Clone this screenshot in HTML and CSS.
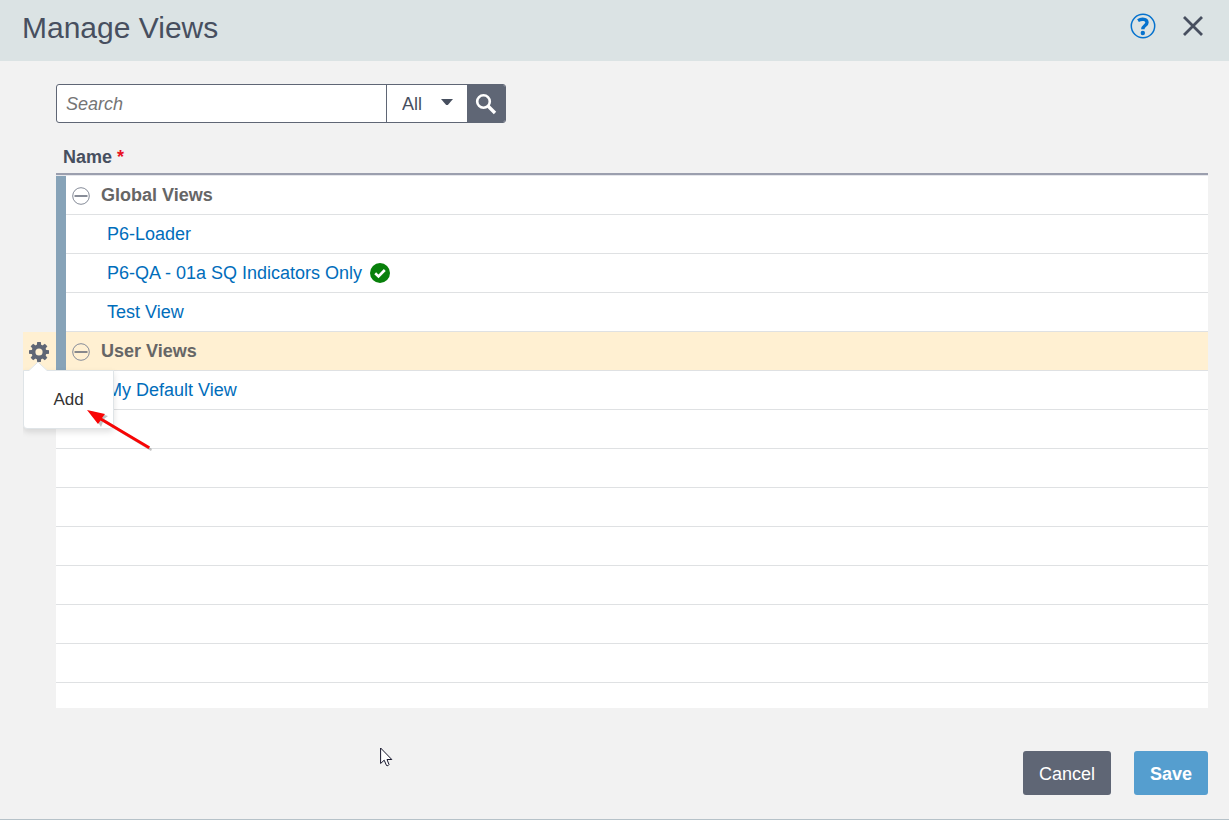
FILE: index.html
```html
<!DOCTYPE html>
<html lang="en">
<head>
<meta charset="utf-8">
<title>Manage Views</title>
<link rel="stylesheet" href="styles.css">
</head>
<body>
<div class="dialog" role="dialog" aria-labelledby="dialog-title">
  <header class="dialog-header">
    <h1 class="dialog-title" id="dialog-title">Manage Views</h1>
    <div class="header-actions">
      <button class="icon-button" type="button" aria-label="Help">
        <svg width="26" height="26" viewBox="0 0 26 26"><circle cx="13" cy="13" r="11.7" fill="none" stroke="#0572ce" stroke-width="1.5"/><path d="M8 7.600C11.500 5.500 17 5.800 17 9.500C17 12.700 12.800 12.400 12.800 16.300" fill="none" stroke="#0572ce" stroke-width="3.400"/><circle cx="12.800" cy="20" r="2.200" fill="#0572ce"/></svg>
      </button>
      <button class="icon-button" type="button" aria-label="Close">
        <svg width="26" height="26" viewBox="0 0 26 26"><path d="M4 4L22 22M22 4L4 22" fill="none" stroke="#474f5f" stroke-width="2.8"/></svg>
      </button>
    </div>
  </header>

  <main class="dialog-body">
    <form class="search" role="search">
      <input class="search-input" type="text" placeholder="Search" aria-label="Search">
      <div class="search-scope">
        <select class="search-select" aria-label="Search in"><option>All</option></select>
        <svg class="search-caret" width="12" height="7" viewBox="0 0 12 7"><path d="M0 0H12L6.800 6H5.200Z" fill="#474f5f"/></svg>
      </div>
      <button class="search-button" type="submit" aria-label="Run search">
        <svg width="22" height="22" viewBox="0 0 22 22"><circle cx="8.500" cy="8.500" r="6.300" fill="none" stroke="#fff" stroke-width="2.600"/><path d="M13 13L20 20" stroke="#fff" stroke-width="3.400"/></svg>
      </button>
    </form>

    <div class="grid">
      <table class="views">
        <colgroup><col class="col-gutter"><col class="col-marker"><col></colgroup>
        <thead>
          <tr><td></td><th class="name-header" colspan="2" scope="col">Name <span class="required">*</span></th></tr>
        </thead>
        <tbody>
          <tr class="row marked"><td class="gutter"></td><td class="marker"></td><td class="cell"><div class="group"><button class="toggle" type="button" aria-label="Collapse Global Views"><svg width="18" height="18" viewBox="0 0 18 18"><circle cx="9" cy="9" r="8.300" fill="#fff" stroke="#858b98"/><path d="M2.500 9H15.500" stroke="#5f6675" stroke-width="1.500"/></svg></button>Global Views</div></td></tr>
          <tr class="row marked"><td class="gutter"></td><td class="marker"></td><td class="cell"><div class="view"><a class="view-link" href="#">P6-Loader</a></div></td></tr>
          <tr class="row marked"><td class="gutter"></td><td class="marker"></td><td class="cell"><div class="view"><a class="view-link" href="#">P6-QA - 01a SQ Indicators Only</a><svg width="20" height="20" viewBox="0 0 20 20" role="img" aria-label="Current view"><circle cx="10" cy="10" r="10" fill="#08800b"/><path d="M5.200 10.200L8.500 13.400L14.800 7" fill="none" stroke="#fff" stroke-width="2.600"/></svg></div></td></tr>
          <tr class="row marked"><td class="gutter"></td><td class="marker"></td><td class="cell"><div class="view"><a class="view-link" href="#">Test View</a></div></td></tr>
          <tr class="row marked selected">
            <td class="gutter">
              <button class="gear" type="button" aria-label="Row actions" aria-expanded="true"><svg width="20" height="20" viewBox="-10 -10 20 20"><g fill="#5f6675"><path id="tooth" d="M-2.300 -6L-1.800 -10H1.800L2.300 -6Z"/><use href="#tooth" transform="rotate(45)"/><use href="#tooth" transform="rotate(90)"/><use href="#tooth" transform="rotate(135)"/><use href="#tooth" transform="rotate(180)"/><use href="#tooth" transform="rotate(225)"/><use href="#tooth" transform="rotate(270)"/><use href="#tooth" transform="rotate(315)"/></g><circle r="5.500" fill="none" stroke="#5f6675" stroke-width="3.800"/></svg></button>
              <div class="menu" role="menu">
                <svg class="menu-notch" width="20" height="10" viewBox="0 0 20 10"><path d="M0 10L10 1L20 10Z" fill="#fff"/><path d="M0 9.500H1L10 1L19 9.500H20" fill="none" stroke="#dfe4e7"/></svg>
                <button class="menu-item" type="button" role="menuitem">Add</button>
                <svg class="pointer-arrow" width="68" height="46" viewBox="0 0 68 46"><path d="M4 2L21 7L17 10L65 40L64 42L16 13L14 18Z" fill="#777" opacity=".45"/><path d="M0 1L18 5L15 9L63 37.500L61.500 40L13.500 11.500L11 15Z" fill="#f80404"/></svg>
              </div>
            </td>
            <td class="marker"></td><td class="cell"><div class="group"><button class="toggle" type="button" aria-label="Collapse User Views"><svg width="18" height="18" viewBox="0 0 18 18"><circle cx="9" cy="9" r="8.300" fill="none" stroke="#858b98"/><path d="M2.500 9H15.500" stroke="#5f6675" stroke-width="1.500"/></svg></button>User Views</div></td></tr>
          <tr class="row"><td class="gutter"></td><td class="marker"></td><td class="cell"><div class="view"><a class="view-link" href="#">My Default View</a></div></td></tr>
          <tr class="row"><td class="gutter"></td><td class="marker"></td><td class="cell"></td></tr>
          <tr class="row"><td class="gutter"></td><td class="marker"></td><td class="cell"></td></tr>
          <tr class="row"><td class="gutter"></td><td class="marker"></td><td class="cell"></td></tr>
          <tr class="row"><td class="gutter"></td><td class="marker"></td><td class="cell"></td></tr>
          <tr class="row"><td class="gutter"></td><td class="marker"></td><td class="cell"></td></tr>
          <tr class="row"><td class="gutter"></td><td class="marker"></td><td class="cell"></td></tr>
          <tr class="row"><td class="gutter"></td><td class="marker"></td><td class="cell"></td></tr>
          <tr class="row"><td class="gutter"></td><td class="marker"></td><td class="cell"></td></tr>
        </tbody>
      </table>
    </div>
  </main>

  <footer class="dialog-footer">
    <button class="button button-cancel" type="button">Cancel</button>
    <button class="button button-save" type="button">Save</button>
  </footer>
  <svg class="cursor" width="13" height="20" viewBox="0 0 13 20"><path d="M.600 1L.600 16.500L4.200 13.200L6.500 18.500Q8 19.500 9 17.500L7 12.500H11.800Z" fill="#fff" stroke="#14142a"/></svg>
</div>
</body>
</html>
```
FILE: styles.css
```css
* { box-sizing: border-box; }

body {
  margin: 0;
  color: #474f5f;
  font-family: "Liberation Sans", Arial, sans-serif;
  font-size: 18px;
  line-height: 22px;
}

button, input, select {
  margin: 0;
  padding: 0;
  border: 0;
  background: none;
  color: inherit;
  font: inherit;
}

svg { display: block; }

.dialog {
  position: relative;
  display: flex;
  flex-direction: column;
  height: 100vh;
  background: #f2f2f2;
  border-bottom: 1px solid #b6c2c9;
}

.dialog-header {
  display: flex;
  justify-content: space-between;
  align-items: flex-start;
  flex: none;
  height: 61px;
  padding: 10px 23px 0 22px;
  background: #dbe3e4;
}

.dialog-title {
  margin: 0;
  font-size: 30px;
  font-weight: 400;
  line-height: 36px;
}

.header-actions { display: flex; gap: 24px; padding-top: 3px; }

.dialog-body {
  display: flex;
  flex-direction: column;
  flex: 1;
  min-height: 0;
  padding: 23px 21px 0 23px;
}

.search {
  display: flex;
  flex: none;
  width: 450px;
  height: 39px;
  margin-left: 33px;
  border: 1px solid #5f6675;
  border-radius: 3px;
  background: #fff;
  overflow: hidden;
}

.search-input { flex: 1; min-width: 0; padding: 0 9px; }
.search-input::placeholder { color: #757575; font-style: italic; opacity: 1; }

.search-scope {
  position: relative;
  width: 81px;
  border-left: 1px solid #5f6675;
}

.search-select {
  width: 100%;
  height: 100%;
  padding-left: 15px;
  appearance: none;
}

.search-caret { position: absolute; top: 14px; right: 14px; pointer-events: none; }

.search-button {
  display: flex;
  align-items: center;
  justify-content: center;
  width: 38px;
  background: #5f6675;
}

.grid { flex: 1; min-height: 0; margin-top: 23px; overflow: hidden; }

.views { width: 100%; table-layout: fixed; border-spacing: 0; }
.views td, .views th { padding: 0; }
.col-gutter { width: 33px; }
.col-marker { width: 10px; }
.gutter { position: relative; }

.views .name-header {
  height: 29px;
  padding: 0 0 5px 7px;
  border-bottom: 2px solid #9b9fae;
  text-align: left;
}

.required { color: #e81123; }

.row { height: 39px; }
.row:first-child { height: 40px; }
.marker, .cell { background: #fff; border-bottom: 1px solid #dfe1e3; }
.marked .marker { background: #87a3b8; border-bottom-color: #87a3b8; }
.selected .marker { border-bottom-color: #dfe1e3; }
.row:first-child .marker, .row:first-child .cell { border-top: 1px solid #e6e7eb; }
.selected .gutter, .selected .cell { background: #fff0d2; }

.group { display: flex; align-items: center; gap: 11px; padding-left: 6px; color: #666; font-weight: 700; }
.toggle { padding-top: 2px; }
.view { display: flex; align-items: center; gap: 8px; padding-left: 41px; }
.view-link { color: #006dbb; text-decoration: none; }

.gear { display: block; margin-left: 6px; }

.menu {
  position: absolute;
  z-index: 1;
  top: 38px;
  left: 0;
  width: 91px;
  background: #fff;
  border: 1px solid #dfe4e7;
  border-radius: 0 0 4px 4px;
  box-shadow: 0 3px 6px rgba(0, 0, 0, 0.12);
}

.menu-notch { position: absolute; top: -10px; left: 4px; }
.menu-item { display: block; width: 100%; height: 57px; color: #333; font-size: 17px; }
.pointer-arrow { position: absolute; top: 38px; left: 63px; }

.dialog-footer {
  display: flex;
  flex: none;
  justify-content: flex-end;
  gap: 23px;
  padding: 43px 21px 24px;
}

.button { height: 44px; padding: 2px 16px 0; border-radius: 3px; color: #fff; }
.button-cancel { background: #5f6675; }
.button-save { background: #559ecf; font-weight: 700; }

.cursor { position: absolute; top: 747px; left: 380px; }
```
